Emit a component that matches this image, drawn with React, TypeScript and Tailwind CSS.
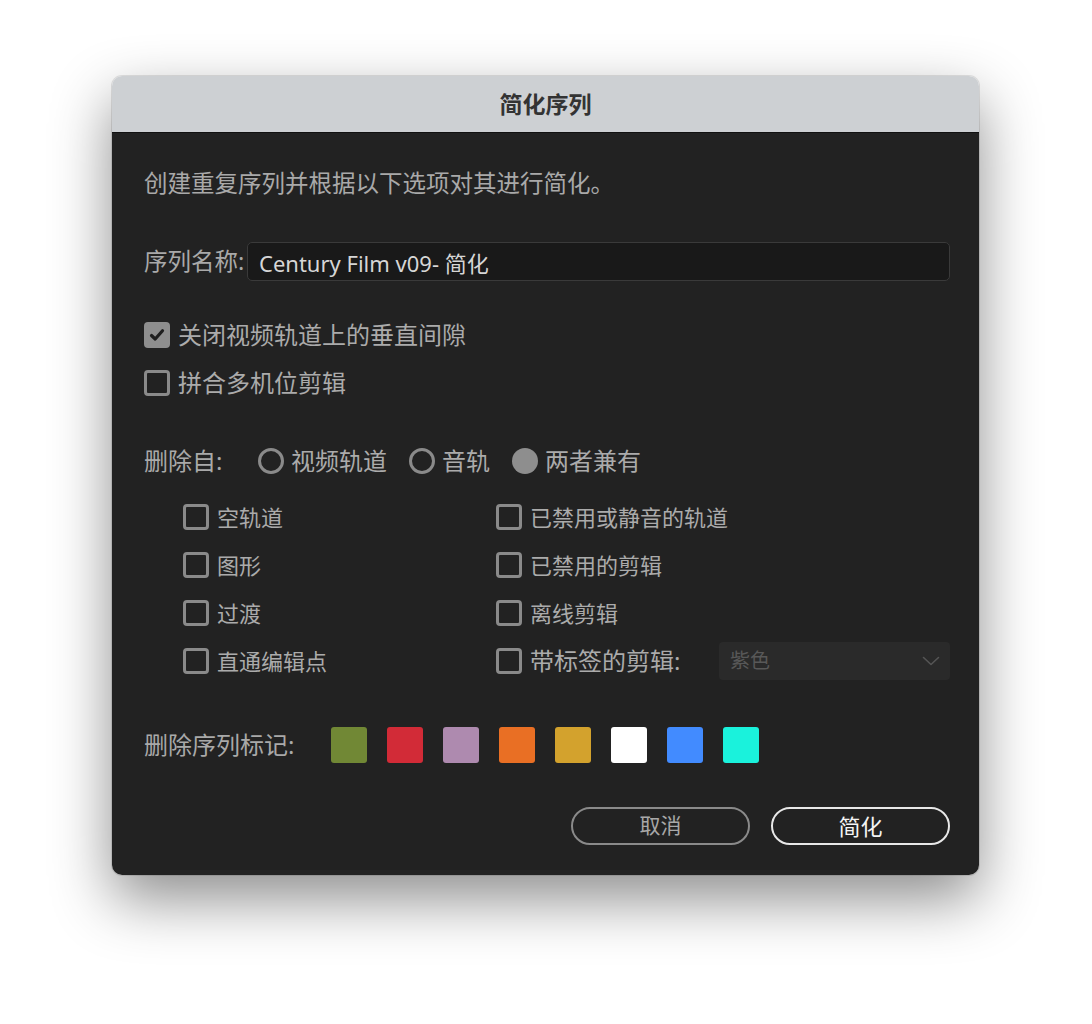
import { useState } from 'react';

const FONT = { fontFamily: '"Noto Sans", "Noto Sans CJK SC", sans-serif' };

const markerColors = ['#718835', '#d22b37', '#ae8aaf', '#e96f24', '#d3a22d', '#ffffff', '#428bff', '#1af2dc'];

function Checkbox({ checked, label, small }: { checked?: boolean; label: string; small?: boolean }) {
  return (
    <div className="flex items-center h-[26px]">
      {checked ? (
        <span className="w-[26px] h-[26px] rounded-[4px] bg-[#8e8e8e] flex items-center justify-center">
          <svg width="18" height="18" viewBox="0 0 18 18" fill="none">
            <path d="M3.5 9.5 L7.2 13 L14.5 4.8" stroke="#1f1f1f" strokeWidth="3.2" strokeLinecap="round" strokeLinejoin="round" />
          </svg>
        </span>
      ) : (
        <span className="w-[26px] h-[26px] rounded-[4px] border-[3px] border-[#8a8a8a]" />
      )}
      <span className={`ml-2 leading-none whitespace-nowrap text-[#ababab] ${small ? 'text-[22px]' : 'text-[24px]'}`}>{label}</span>
    </div>
  );
}

function Radio({ selected, label }: { selected?: boolean; label: string }) {
  return (
    <div className="flex items-center mr-[22px]">
      {selected ? (
        <span className="w-[26px] h-[26px] rounded-full bg-[#8e8e8e]" />
      ) : (
        <span className="w-[26px] h-[26px] rounded-full border-[3px] border-[#8a8a8a]" />
      )}
      <span className="ml-[7px] text-[24px] leading-none whitespace-nowrap text-[#ababab]">{label}</span>
    </div>
  );
}

export default function App() {
  const [name, setName] = useState('Century Film v09- 简化');

  return (
    <div className="w-[1092px] h-[1024px] bg-white pl-[112px] pt-[76px]" style={FONT}>
      <div className="w-[867px] rounded-[10px] overflow-hidden shadow-[0_24px_60px_rgba(0,0,0,0.45)] ring-1 ring-black/10">
        <div className="h-[56px] bg-[#cdd0d3] flex items-center justify-center">
          <span className="text-[23px] font-bold text-[#333]">简化序列</span>
        </div>
        <div className="h-px bg-[#111]" />
        <div className="bg-[#222222] pl-[32px] pr-[29px] pb-[30px] flex flex-col">
          <p className="mt-[36px] h-[28px] leading-[28px] text-[23.5px] whitespace-nowrap text-[#a9a9a9]">创建重复序列并根据以下选项对其进行简化。</p>

          <div className="mt-[45px] flex items-center h-[39px]">
            <span className="w-[103px] shrink-0 whitespace-nowrap text-[23.5px] text-[#a9a9a9]">序列名称:</span>
            <input
              value={name}
              onChange={(e) => setName(e.target.value)}
              className="flex-1 h-[39px] bg-[#191919] border border-[#3a3a3a] rounded-[5px] px-[11px] text-[22px] text-[#d6d6d6] outline-none"
              style={FONT}
            />
          </div>

          <div className="mt-[41px]">
            <Checkbox checked label="关闭视频轨道上的垂直间隙" />
          </div>
          <div className="mt-[22px]">
            <Checkbox label="拼合多机位剪辑" />
          </div>

          <div className="mt-[52px] flex items-center h-[26px]">
            <span className="w-[114px] shrink-0 text-[24px] leading-none whitespace-nowrap text-[#a9a9a9]">删除自:</span>
            <Radio label="视频轨道" />
            <Radio label="音轨" />
            <Radio selected label="两者兼有" />
          </div>

          <div className="mt-[19px] ml-[39px] grid grid-cols-[313px_1fr]">
            <div className="h-12 flex items-center"><Checkbox small label="空轨道" /></div>
            <div className="h-12 flex items-center"><Checkbox small label="已禁用或静音的轨道" /></div>
            <div className="h-12 flex items-center"><Checkbox small label="图形" /></div>
            <div className="h-12 flex items-center"><Checkbox small label="已禁用的剪辑" /></div>
            <div className="h-12 flex items-center"><Checkbox small label="过渡" /></div>
            <div className="h-12 flex items-center"><Checkbox small label="离线剪辑" /></div>
            <div className="h-12 flex items-center"><Checkbox small label="直通编辑点" /></div>
            <div className="h-12 flex items-center justify-between">
              <Checkbox label="带标签的剪辑:" />
              <div className="w-[231px] h-[38px] rounded-[4px] bg-[#2a2a2a] flex items-center justify-between pl-[11px] pr-[10px]">
                <span className="text-[20px] text-[#585858]">紫色</span>
                <svg width="18" height="10" viewBox="0 0 18 10" fill="none">
                  <path d="M1.5 1.5 L9 8.5 L16.5 1.5" stroke="#555" strokeWidth="1.6" strokeLinecap="round" strokeLinejoin="round" />
                </svg>
              </div>
            </div>
          </div>

          <div className="mt-[42px] flex items-center h-9">
            <span className="w-[187px] shrink-0 whitespace-nowrap text-[24px] text-[#a9a9a9]">删除序列标记:</span>
            <div className="flex gap-5">
              {markerColors.map((c) => (
                <span key={c} className="w-9 h-9 rounded-[3px]" style={{ backgroundColor: c }} />
              ))}
            </div>
          </div>

          <div className="mt-[44px] flex justify-end gap-[21px]">
            <button className="w-[179px] h-[38px] rounded-full border-2 border-[#8a8a8a] text-[21px] text-[#a8a8a8] flex items-center justify-center" style={FONT}>
              取消
            </button>
            <button className="w-[179px] h-[38px] rounded-full border-2 border-[#e8e8e8] text-[22px] text-[#f4f4f4] flex items-center justify-center" style={FONT}>
              简化
            </button>
          </div>
        </div>
      </div>
    </div>
  );
}
